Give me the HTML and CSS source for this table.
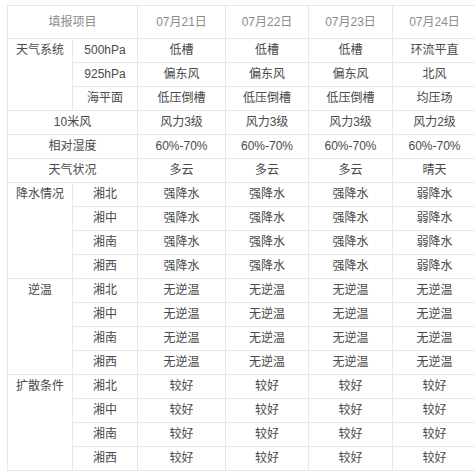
FILE: index.html
```html
<!DOCTYPE html>
<html lang="zh">
<head>
<meta charset="utf-8">
<link rel="stylesheet" href="styles.css">
</head>
<body>
<table class="grid">
  <colgroup>
    <col class="c1"><col class="c2"><col class="c3"><col class="c4"><col class="c5"><col class="c6">
  </colgroup>
  <thead>
    <tr><th colspan="2">填报项目</th><th>07月21日</th><th>07月22日</th><th>07月23日</th><th>07月24日</th></tr>
  </thead>
  <tbody>
    <tr><td rowspan="3" class="group">天气系统</td><td>500hPa</td><td>低槽</td><td>低槽</td><td>低槽</td><td>环流平直</td></tr>
    <tr><td>925hPa</td><td>偏东风</td><td>偏东风</td><td>偏东风</td><td>北风</td></tr>
    <tr><td>海平面</td><td>低压倒槽</td><td>低压倒槽</td><td>低压倒槽</td><td>均压场</td></tr>
    <tr><td colspan="2">10米风</td><td>风力3级</td><td>风力3级</td><td>风力3级</td><td>风力2级</td></tr>
    <tr><td colspan="2">相对湿度</td><td>60%-70%</td><td>60%-70%</td><td>60%-70%</td><td>60%-70%</td></tr>
    <tr><td colspan="2">天气状况</td><td>多云</td><td>多云</td><td>多云</td><td>晴天</td></tr>
    <tr><td rowspan="4" class="group">降水情况</td><td>湘北</td><td>强降水</td><td>强降水</td><td>强降水</td><td>弱降水</td></tr>
    <tr><td>湘中</td><td>强降水</td><td>强降水</td><td>强降水</td><td>弱降水</td></tr>
    <tr><td>湘南</td><td>强降水</td><td>强降水</td><td>强降水</td><td>弱降水</td></tr>
    <tr><td>湘西</td><td>强降水</td><td>强降水</td><td>强降水</td><td>弱降水</td></tr>
    <tr><td rowspan="4" class="group">逆温</td><td>湘北</td><td>无逆温</td><td>无逆温</td><td>无逆温</td><td>无逆温</td></tr>
    <tr><td>湘中</td><td>无逆温</td><td>无逆温</td><td>无逆温</td><td>无逆温</td></tr>
    <tr><td>湘南</td><td>无逆温</td><td>无逆温</td><td>无逆温</td><td>无逆温</td></tr>
    <tr><td>湘西</td><td>无逆温</td><td>无逆温</td><td>无逆温</td><td>无逆温</td></tr>
    <tr><td rowspan="4" class="group">扩散条件</td><td>湘北</td><td>较好</td><td>较好</td><td>较好</td><td>较好</td></tr>
    <tr><td>湘中</td><td>较好</td><td>较好</td><td>较好</td><td>较好</td></tr>
    <tr><td>湘南</td><td>较好</td><td>较好</td><td>较好</td><td>较好</td></tr>
    <tr><td>湘西</td><td>较好</td><td>较好</td><td>较好</td><td>较好</td></tr>
  </tbody>
</table>
</body>
</html>
```

FILE: styles.css
```css
html {
  overflow: hidden;
  background: #fff;
}
body {
  margin: 0;
  padding: 5px 0 0 7px;
  font-family: "Liberation Sans", "Noto Sans CJK SC", sans-serif;
  font-size: 12px;
  color: #4a4a4a;
}
.grid {
  border-collapse: collapse;
  table-layout: fixed;
  width: 469px;
}
.c1 { width: 65px; }
.c2 { width: 65px; }
.c3 { width: 88px; }
.c4 { width: 83px; }
.c5 { width: 84px; }
.c6 { width: 84px; }
.grid th,
.grid td {
  border: 1px solid #e6e8eb;
  padding: 0;
  text-align: center;
  white-space: nowrap;
  overflow: hidden;
}
.grid th {
  height: 32px;
  line-height: 32px;
  font-weight: normal;
  color: #8c8c8c;
}
.grid td {
  height: 23px;
  line-height: 23px;
}
.grid td.group {
  vertical-align: top;
}
```
